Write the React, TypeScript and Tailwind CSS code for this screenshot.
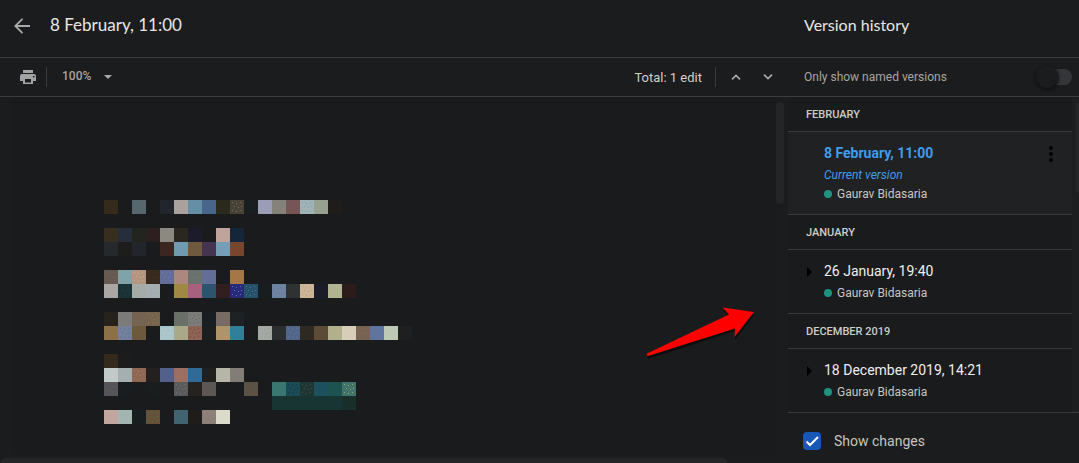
import { useState } from "react";

const CELL = 14;

// One entry per mosaic line: [line, cells]. "-" is an empty cell, "base/dot" a speckled one.
const MOSAIC: [number, string][] = [
  [0, "352b1c - 56676e - 22252b a8a19c 648fa5 48658a 2b291c 474238/8a6847 191f20 9a9db5 85827a/6c7f88 765557 9fb3b6/7f9fb0 98a08f 1f1c1a"],
  [2, "372e1f 262f38/1b2660 24241f 2b1f20/471f22 8c8a80 29271f 1b1b29 - c0a49c 15253a"],
  [3, "25282c 1d1d1c 22252b - 3c2622 6f9ab0 6f5a3f 453450 779db4 74482f/b32a20"],
  [5, "665a50/7a6550 7fa3a8 b4957f/d0ab8c 372b1d/5c2a1c 626c97/6d87ae ab877e 6a716c/5d7e8c 626e98 - a57747"],
  [6, "aaa6a3 1a3236/243f3f a5aca7/98a9a2 a3acae/b3b3bd - 9f8843 a7617f 2c546e 301e20 272a78/5b78b8 26506c/428077 181d20 6b83a0/8b8da0 2e3232 cbb596/bb9d83 1c1b29 b1b28f/b3b6a6 2c1b1b/491a1a"],
  [8, "25231c/1a1a18 7b7b7a 756452/695c55 76644e/8d7952 - 6a6f68 7b7b7a/62625f 191e22 776c65/897063 1f2224"],
  [9, "8c7047 72809b/57739c 6d5a3e - a9c5cc/cbd4bb a9a887 8c6354/75413b 1b1f20 ae936b/cc9b51 31809a - a3a8a3/8e9c94 2b2e2e 52668c/4f8297 2e2a22 5e4b37/395238 b1b08c/c3ae83 d8cdb9 7a6252/697660 6074a0 bcc9b4 1f1f1f"],
  [11, "33291c/403018 1c1c1c"],
  [12, "c1c9c9 a5afaf 8f6754/a18263 23201f 53618a 9d6f63 306b98 22201f b5b5a8 837d77/92837a"],
  [13, "575558/384b70 191d20 - 191d1e - 5b5b5b/6b7773 25221f 5b5755/795744 - - 5b5145 - 3a7771 1b4b54/153640 203634/41522c 1c505c/245474 1c5350 42726c/9aab58"],
  [14, "- - - - - - - - - - - - 183533 183533 183533 183533 183533 17302c/2a1c1b"],
  [15, "c0a69e a3b5b2/b5b591 181d20 65503a/408038 - 43656f/2d5e85 1f1c1a 8a8079/ad8975 dcdacd/e2ddb0"],
];

const SPECKS = [
  [2, 2],
  [6, 3],
  [10, 2],
  [4, 6],
  [8, 7],
  [11, 6],
  [2, 10],
  [6, 11],
  [10, 10],
];

const PixelatedText = () => (
  <svg width={308} height={224} shapeRendering="crispEdges" aria-hidden="true">
    {MOSAIC.map(([line, cells]) =>
      cells.split(" ").map((cell, col) => {
        if (cell === "-") return null;
        const [base, dot] = cell.split("/");
        return (
          <g key={`${line}-${col}`} transform={`translate(${col * CELL} ${line * CELL})`}>
            <rect width={CELL} height={CELL} fill={`#${base}`} />
            {dot && SPECKS.map(([x, y]) => <rect key={`${x}-${y}`} x={x} y={y} width={1} height={1} fill={`#${dot}`} />)}
          </g>
        );
      })
    )}
  </svg>
);

const Pointer = () => (
  <svg className="absolute right-[31px] top-[205px]" width={112} height={58} viewBox="0 0 112 58" aria-hidden="true">
    <path d="M2 52 84 13 78 6 109 11 90 36 90 27 3 55Z" fill="#000" opacity={0.5} transform="translate(0 2)" />
    <path d="M2 51.5 84 12.5 77.500 5.500 109 10 89.500 35 90 26.500 3 54Q1 53.500 2 51.500Z" fill="#fe0000" />
  </svg>
);

type Version = { date: string; current?: boolean };

const GROUPS: { month: string; versions: Version[] }[] = [
  { month: "FEBRUARY", versions: [{ date: "8 February, 11:00", current: true }] },
  { month: "JANUARY", versions: [{ date: "26 January, 19:40" }] },
  { month: "DECEMBER 2019", versions: [{ date: "18 December 2019, 14:21" }] },
];

const Editor = () => (
  <div className="flex items-center gap-[5px] text-xs leading-4 text-[#c8c5bf]">
    <span className="size-2 rounded-full bg-[#219180]" />
    Gaurav Bidasaria
  </div>
);

const VersionRow = ({ date, current }: Version) => {
  if (current) {
    return (
      <li className="flex h-[83px] items-start justify-between border-b border-[#38393b] bg-[#202123] pl-9 pr-3 pt-3">
        <div>
          <button className="block text-sm leading-[18px] font-bold text-[#419ceb]">{date}</button>
          <p className="mt-[5px] mb-[3px] text-xs leading-4 text-[#419ceb] italic">Current version</p>
          <Editor />
        </div>
        <button aria-label="More actions" className="mt-0.5 flex w-[18px] justify-center">
          <svg width={4} height={16} viewBox="0 0 4 16" fill="#000">
            <circle cx={2} cy={2} r={2} />
            <circle cx={2} cy={8} r={2} />
            <circle cx={2} cy={14} r={2} />
          </svg>
        </button>
      </li>
    );
  }

  return (
    <li className="flex h-16 items-start border-b border-[#38393b] pt-3">
      <button aria-label={`Expand ${date}`} className="flex h-5 w-9 items-center pl-[19px]">
        <svg width={5} height={10} viewBox="0 0 5 10">
          <path d="M0 0 5 5 0 10Z" fill="#000" />
        </svg>
      </button>
      <div>
        <button className="mb-[5px] block text-sm leading-[18px] text-[#f0eeeb]">{date}</button>
        <Editor />
      </div>
    </li>
  );
};

const App = () => {
  const [namedOnly, setNamedOnly] = useState(false);
  const [showChanges, setShowChanges] = useState(true);

  return (
    <div className="flex min-h-screen bg-[#1b1c1e] font-['Roboto',sans-serif] text-[#e8e6e3]">
      <main className="relative flex min-w-0 flex-1 flex-col">
        <header className="flex h-[58px] items-center border-b border-[#3b3c41] pb-1.5 pl-3.5">
          <button aria-label="Back">
            <svg width={16} height={16} viewBox="0 0 16 16" fill="none" stroke="#a9a9a7" strokeWidth={1.8}>
              <path d="M16 8H1.500M8.500 .8 1.300 8l7.200 7.200" />
            </svg>
          </button>
          <h1 className="ml-5 pb-0.5 font-['Lato',sans-serif] text-[17px] leading-6">8 February, 11:00</h1>
        </header>

        <div className="flex h-[39px] items-center border-b border-[#3b3c41] pr-2">
          <button aria-label="Print" className="ml-5">
            <svg width={16} height={14} viewBox="0 0 16 14" fill="#a2a3a3">
              <path d="M3 0h10v3H3zM2 4h12a2 2 0 0 1 2 2v5h-3v3H3v-3H0V6a2 2 0 0 1 2-2zm3 5v3.500h6V9zm8-3v1.500h1.500V6z" fillRule="evenodd" />
            </svg>
          </button>
          <div className="ml-2.5 h-5 w-px bg-[#3b3c41]" />
          <label className="ml-[15px] flex items-center text-xs font-medium text-[#a8a5a0]">
            <select aria-label="Zoom" defaultValue="100%" className="w-[42px] appearance-none bg-transparent pb-0.5 outline-none">
              <option>100%</option>
            </select>
            <svg width={8} height={4} viewBox="0 0 8 4" aria-hidden="true">
              <path d="M0 0h8L4 4Z" fill="#a9a9a7" />
            </svg>
          </label>
          <span className="ml-auto pt-0.5 text-[13px] leading-[18px] text-[#d3d0ca]">Total: 1 edit</span>
          <div className="ml-[13px] h-5 w-px bg-[#3b3c41]" />
          <button aria-label="Previous edit" className="ml-2 flex size-6 items-center justify-center">
            <svg width={10} height={6} viewBox="0 0 10 6" fill="none" stroke="#a9a9a7" strokeWidth={1.600}>
              <path d="M1 5.400 5 1.400 9 5.400" />
            </svg>
          </button>
          <button aria-label="Next edit" className="ml-2 flex size-6 items-center justify-center">
            <svg width={10} height={6} viewBox="0 0 10 6" fill="none" stroke="#a9a9a7" strokeWidth={1.600}>
              <path d="M1 .6 5 4.600 9 .6" />
            </svg>
          </button>
        </div>

        <div className="relative flex flex-1 flex-col">
          <div className="flex flex-1">
            <div className="ml-[11px] flex-1 bg-[#1a1b1c] pt-[103px] pb-[30px] pl-[93px]">
              <PixelatedText />
            </div>
            <div className="w-3 pt-[5px]">
              <div className="h-[102px] w-2 rounded-full bg-[#242527]" />
            </div>
          </div>
          <div className="h-[9px] overflow-hidden pt-1">
            <div className="ml-px mr-[61px] h-2 rounded-full bg-[#242527]" />
          </div>
          <Pointer />
        </div>
      </main>

      <aside className="flex w-[291px] shrink-0 flex-col">
        <h2 className="flex h-[58px] items-center border-b border-[#3b3c41] pb-2 pl-4 font-['Lato',sans-serif] text-base leading-6">
          Version history
        </h2>
        <label className="flex h-[39px] items-center justify-between border-b border-[#3b3c41] pr-[7px] pl-4 text-xs text-[#a8a5a0]">
          Only show named versions
          <span className="relative flex h-4 w-8 items-center rounded-full bg-[#35363a]">
            <input
              type="checkbox"
              role="switch"
              checked={namedOnly}
              onChange={(e) => setNamedOnly(e.target.checked)}
              className="peer absolute inset-0 appearance-none"
            />
            <span className="-ml-1 size-[22px] rounded-full bg-[#1b1c1d] shadow-[0_1px_3px_1px_#111213] peer-checked:ml-3.5" />
          </span>
        </label>

        <div className="flex flex-1 border-b border-[#3b3c41]">
          <div className="flex-1 bg-[#1a1b1d]">
            {GROUPS.map((group) => (
              <section key={group.month} className="last:-mb-px">
                <h3 className="flex h-[35px] items-center border-b border-[#38393b] pt-0.5 pl-[18px] text-[11px] font-medium text-[#d0cdc7]">
                  {group.month}
                </h3>
                <ul>
                  {group.versions.map((version) => (
                    <VersionRow key={version.date} {...version} />
                  ))}
                </ul>
              </section>
            ))}
          </div>
          <div className="w-[7px] overflow-hidden bg-[#1d1e20] pt-[5px] pl-1">
            <div className="h-[91px] w-2 rounded-full bg-[#252628]" />
          </div>
        </div>

        <label className="flex h-[50px] items-center gap-[13px] pt-1.5 pl-[15px] text-sm text-[#c8c5bf]">
          <span className="relative flex size-[18px]">
            <input
              type="checkbox"
              checked={showChanges}
              onChange={(e) => setShowChanges(e.target.checked)}
              className="peer size-[18px] appearance-none rounded-sm border-2 border-[#8b8c8e] checked:border-0 checked:bg-[#1757b5]"
            />
            <svg
              className="pointer-events-none absolute inset-0 hidden peer-checked:block"
              width={18}
              height={18}
              viewBox="0 0 18 18"
              fill="none"
              stroke="#fff"
              strokeWidth={2}
            >
              <path d="m3.500 9.500 3.500 3.500 8-8" />
            </svg>
          </span>
          Show changes
        </label>
      </aside>
    </div>
  );
};

export default App;
